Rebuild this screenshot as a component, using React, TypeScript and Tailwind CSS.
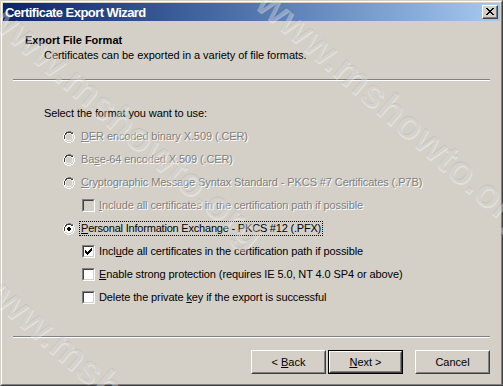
import React from "react";

const font = { fontFamily: '"Liberation Sans", Arial, sans-serif' };

function Radio({ checked = false, disabled = false }: { checked?: boolean; disabled?: boolean }) {
  return (
    <svg width="12" height="12" viewBox="0 0 12 12" className="shrink-0">
      <path d="M4 0h4v1h2v1h1v2h1v4h-1v2h-1v1h-2v1h-4v-1h-2v-1h-1v-2h-1v-4h1v-2h1v-1h2z" fill="#fff" />
      <path d="M4 0h4v1h2v1h-2v-1h-4v1h-2v2h-1v4h1v-1h0v-3h0v-2h1v-1h2z" fill="#808080" />
      <path d="M4 1h4v1h2v1h-2v-1h-4v1h-1v1h-1v4h-1v-4h1v-2h1v-1z" fill="#404040" />
      <path d="M11 4h1v4h-1v2h-1v1h-2v1h-4v-1h4v-1h2v-2h1z" fill="#fff" />
      <path d="M10 4h1v4h-1v2h-2v1h-4v-1h-2v-1h2v1h4v-1h1v-1h1z" fill="#d4d0c8" />
      <circle cx="6" cy="6" r="3.5" fill={disabled ? "#d4d0c8" : "#fff"} />
      {checked && <path d="M5 4h2v1h1v2h-1v1h-2v-1h-1v-2h1z" fill="#000" />}
    </svg>
  );
}

function Check({ checked = false, disabled = false }: { checked?: boolean; disabled?: boolean }) {
  return (
    <div className="w-[13px] h-[13px] shrink-0 border border-t-[#808080] border-l-[#808080] border-r-white border-b-white">
      <div
        className={`w-full h-full border border-t-[#404040] border-l-[#404040] border-r-[#d4d0c8] border-b-[#d4d0c8] ${
          disabled ? "bg-[#d4d0c8]" : "bg-white"
        } flex items-center justify-center`}
      >
        {checked && (
          <svg width="7" height="7" viewBox="0 0 7 7">
            <path d="M0 2h1v1h1v1h1v-1h1v-1h1v-1h1v-1h1v3h-1v1h-1v1h-1v1h-1v1h-1v-1h-1v-1h-1z" fill="#000" />
          </svg>
        )}
      </div>
    </div>
  );
}

function Dis({ children }: { children: React.ReactNode }) {
  return <span className="text-[#808080] [text-shadow:1px_1px_0_#ffffff]">{children}</span>;
}

function Btn({ children, def = false }: { children: React.ReactNode; def?: boolean }) {
  const inner = (
    <div className="w-full h-full border border-t-white border-l-white border-r-[#404040] border-b-[#404040]">
      <div className="w-full h-full border border-t-[#d4d0c8] border-l-[#d4d0c8] border-r-[#808080] border-b-[#808080] flex items-center justify-center text-[11px] text-black whitespace-pre">
        {children}
      </div>
    </div>
  );
  return def ? (
    <div className="w-[75px] h-[24px] border border-black">{inner}</div>
  ) : (
    <div className="w-[75px] h-[24px]">{inner}</div>
  );
}

function Row({ children, indent }: { children: React.ReactNode; indent: string }) {
  return <div className={`h-[23px] flex items-center ${indent}`}>{children}</div>;
}

const wm =
  "absolute origin-left rotate-[41deg] text-[40px] leading-[50px] font-bold whitespace-nowrap text-black/[0.06] [text-shadow:1px_1px_0_rgba(255,255,255,0.4)]";

export default function App() {
  return (
    <div className="w-[503px] h-[386px] relative overflow-hidden bg-[#d4d0c8]" style={font}>
      <div className="w-full h-full border border-t-[#d4d0c8] border-l-[#d4d0c8] border-r-[#404040] border-b-[#404040]">
        <div className="w-full h-full border border-t-white border-l-white border-r-[#808080] border-b-[#808080] p-px flex flex-col">
          {/* title bar */}
          <div className="h-[18px] shrink-0 flex items-center justify-between bg-gradient-to-r from-[#0a246a] to-[#a6caf0] pl-[2px] pr-[2px]">
            <span className="text-white font-bold text-[13px] leading-none tracking-[-0.55px]">Certificate Export Wizard</span>
            <div className="w-[16px] h-[14px] border border-t-white border-l-white border-r-[#404040] border-b-[#404040] bg-[#d4d0c8]">
              <div className="w-full h-full border-r border-b border-[#808080] flex items-center justify-center">
                <svg width="8" height="7" viewBox="0 0 8 7">
                  <path d="M0 0h2v1h1v1h2v-1h1v-1h2v1h-1v1h-1v1h-1v1h1v1h1v1h1v1h-2v-1h-1v-1h-2v1h-1v1h-2v-1h1v-1h1v-1h1v-1h-1v-1h-1v-1h-1z" fill="#000" />
                </svg>
              </div>
            </div>
          </div>

          {/* header */}
          <div className="h-[58px] shrink-0 flex flex-col pt-[12px]">
            <div className="pl-[22px] text-[11px] font-bold text-black leading-[14px]">Export File Format</div>
            <div className="pl-[41px] text-[11px] text-black leading-[14px] mt-[1px] tracking-[-0.05px]">
              Certificates can be exported in a variety of file formats.
            </div>
          </div>
          <div className="mx-[10px] h-px shrink-0 bg-[#808080]" />
          <div className="mx-[10px] h-px shrink-0 bg-white" />

          {/* body */}
          <div className="flex flex-col pt-[21px] text-[11px] text-black tracking-[-0.1px]">
            <Row indent="pl-[41px]">Select the format you want to use:</Row>
            <Row indent="pl-[60px] gap-[6px]">
              <Radio disabled />
              <Dis>
                <u>D</u>ER encoded binary X.509 (.CER)
              </Dis>
            </Row>
            <Row indent="pl-[60px] gap-[6px]">
              <Radio disabled />
              <Dis>
                Ba<u>s</u>e-64 encoded X.509 (.CER)
              </Dis>
            </Row>
            <Row indent="pl-[60px] gap-[6px]">
              <Radio disabled />
              <Dis>
                <u>C</u>ryptographic Message Syntax Standard - PKCS #7 Certificates (.P7B)
              </Dis>
            </Row>
            <Row indent="pl-[79px] gap-[4px]">
              <Check disabled />
              <Dis>
                <u>I</u>nclude all certificates in the certification path if possible
              </Dis>
            </Row>
            <Row indent="pl-[60px] gap-[4px]">
              <Radio checked />
              <span className="border border-dotted border-black px-px leading-[13px] tracking-[-0.2px]">
                <u>P</u>ersonal Information Exchange - PKCS #12 (.PFX)
              </span>
            </Row>
            <Row indent="pl-[79px] gap-[4px]">
              <Check checked />
              <span>
                Incl<u>u</u>de all certificates in the certification path if possible
              </span>
            </Row>
            <Row indent="pl-[79px] gap-[4px]">
              <Check />
              <span>
                <u>E</u>nable strong protection (requires IE 5.0, NT 4.0 SP4 or above)
              </span>
            </Row>
            <Row indent="pl-[79px] gap-[4px]">
              <Check />
              <span>
                Delete the private <u>k</u>ey if the export is successful
              </span>
            </Row>
          </div>

          <div className="flex-1" />
          <div className="mx-[10px] h-px shrink-0 bg-[#808080]" />
          <div className="mx-[10px] h-px shrink-0 bg-white" />
          <div className="flex justify-end items-center pt-[12px] pb-[9px] pr-[10px] gap-[2px]">
            <Btn>
              {"< "}
              <u>B</u>
              {"ack"}
            </Btn>
            <Btn def>
              <u>N</u>
              {"ext >"}
            </Btn>
            <div className="w-[8px]" />
            <Btn>Cancel</Btn>
          </div>
        </div>
      </div>

      {/* watermark */}
      <div className="absolute inset-0 pointer-events-none select-none">
        <span className={`${wm} left-[-8px] top-[-18px]`}>www.mshowto.org</span>
        <span className={`${wm} left-[262px] top-[-30px]`}>www.mshowto.org</span>
        <span className={`${wm} left-[-22px] top-[246px]`}>www.mshowto.org</span>
      </div>
    </div>
  );
}
